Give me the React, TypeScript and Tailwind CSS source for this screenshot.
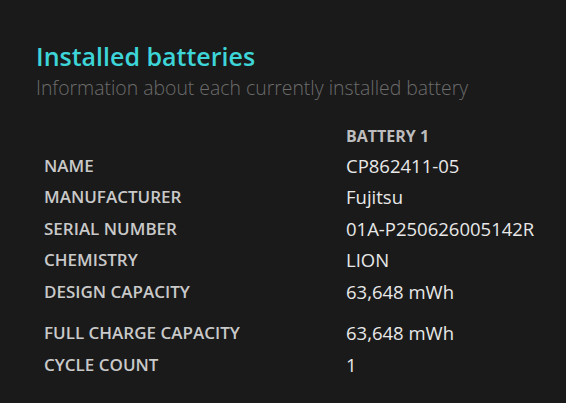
const rows: [string, string][] = [
  ["NAME", "CP862411-05"],
  ["MANUFACTURER", "Fujitsu"],
  ["SERIAL NUMBER", "01A-P250626005142R"],
  ["CHEMISTRY", "LION"],
  ["DESIGN CAPACITY", "63,648 mWh"],
];

const rows2: [string, string][] = [
  ["FULL CHARGE CAPACITY", "63,648 mWh"],
  ["CYCLE COUNT", "1"],
];

function Row({ label, value }: { label: string; value: string }) {
  return (
    <div className="flex h-[31.6px] items-center">
      <div className="w-[302px] text-[17px] font-semibold leading-[31.6px] text-[#c9c9c9]">{label}</div>
      <div className="text-[18.5px] leading-[31.6px] text-[#e8e8e8]">{value}</div>
    </div>
  );
}

export default function App() {
  return (
    <div
      className="h-[403px] w-[566px] overflow-hidden bg-[#1a1a1a] pl-[36px] pt-[40px]"
      style={{ fontFamily: '"Open Sans", "Noto Sans", sans-serif' }}
    >
      <h1 className="text-[25px] font-semibold leading-[33px] text-[#3dd5d8]">Installed batteries</h1>
      <p className="mt-[1px] text-[19.4px] font-light leading-[27px] text-[#6c6c6c]">
        Information about each currently installed battery
      </p>
      <div className="ml-[8px] mt-[17px]">
        <div className="flex h-[31.6px] items-end pb-[4px]">
          <div className="w-[302px]" />
          <div className="text-[16px] font-bold leading-[20px] text-[#bdbdbd]">BATTERY 1</div>
        </div>
        {rows.map(([l, v]) => (
          <Row key={l} label={l} value={v} />
        ))}
        <div className="h-[9.5px]" />
        {rows2.map(([l, v]) => (
          <Row key={l} label={l} value={v} />
        ))}
      </div>
    </div>
  );
}
